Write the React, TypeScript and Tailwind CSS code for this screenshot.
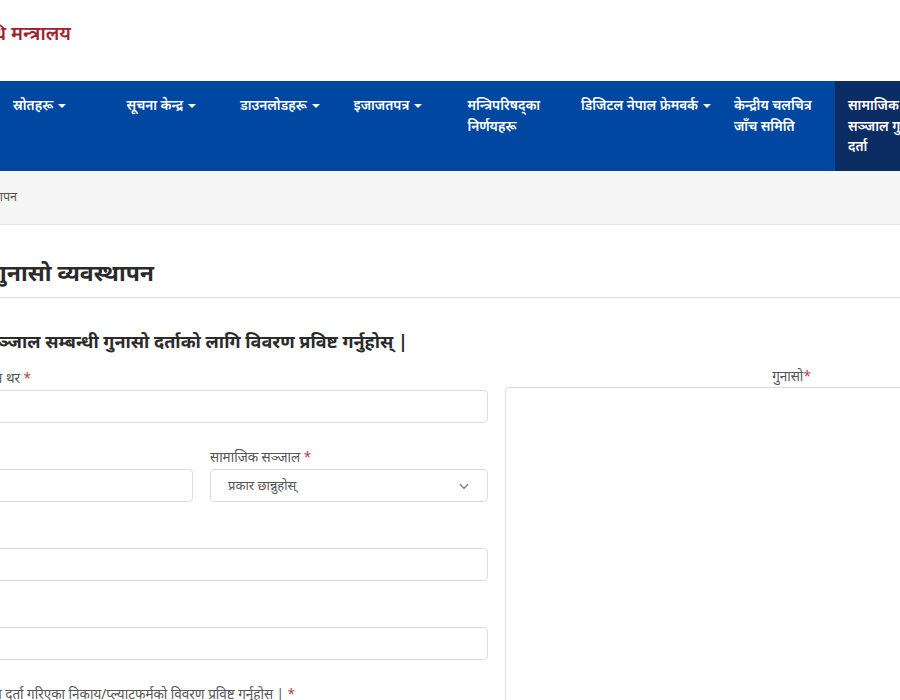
import React from "react";

const Caret = () => (
  <span className="ml-[5px] inline-block h-0 w-0 border-x-[4px] border-t-[4px] border-x-transparent border-t-white align-middle" />
);

const NavItem = ({ w, children, active }: { w: string; children: React.ReactNode; active?: boolean }) => (
  <div className={`${w} shrink-0 px-[13px] pt-[14px] text-[13.5px] font-semibold leading-[20.5px] text-white ${active ? "bg-[#0b2d63]" : ""}`}>
    {children}
  </div>
);

const Label = ({ children, star = true }: { children: React.ReactNode; star?: boolean }) => (
  <div className="h-[20px] whitespace-nowrap text-[13.5px] leading-[20px] text-[#555]">
    {children}
    {star && <span className="text-[#b3404a]"> *</span>}
  </div>
);

const Input = () => <div className="h-[33px] rounded-[4px] border border-[#dcdcdc] bg-white" />;

export default function App() {
  return (
    <div
      className="relative h-[700px] w-[900px] overflow-hidden bg-white"
      style={{ fontFamily: '"Noto Sans", "Noto Sans Devanagari", sans-serif' }}
    >
      {/* top header */}
      <div className="flex h-[81px] items-center">
        <div className="flex w-[71px] shrink-0 justify-end pb-[14px]">
          <span className="whitespace-nowrap text-[19px] font-semibold text-[#a3202f]">
            सञ्चार तथा सूचना प्रविधि मन्त्रालय
          </span>
        </div>
      </div>

      {/* nav */}
      <div className="flex h-[90px] bg-[#0047a1]">
        <NavItem w="w-[113.6px]">
          स्रोतहरू<Caret />
        </NavItem>
        <NavItem w="w-[113.6px]">
          सूचना केन्द्र<Caret />
        </NavItem>
        <NavItem w="w-[113.6px]">
          डाउनलोडहरू<Caret />
        </NavItem>
        <NavItem w="w-[113.6px]">
          इजाजतपत्र<Caret />
        </NavItem>
        <NavItem w="w-[113.6px]">
          मन्त्रिपरिषद्का
          <br />
          निर्णयहरू
        </NavItem>
        <NavItem w="w-[153px]">
          <span className="whitespace-nowrap">
            डिजिटल नेपाल फ्रेमवर्क<Caret />
          </span>
        </NavItem>
        <NavItem w="w-[114px]">
          केन्द्रीय चलचित्र
          <br />
          जाँच समिति
        </NavItem>
        <NavItem w="w-[120px]" active>
          <span className="whitespace-nowrap">सामाजिक</span>
          <br />
          <span className="whitespace-nowrap">सञ्जाल गुनासो</span>
          <br />
          दर्ता
        </NavItem>
      </div>

      {/* breadcrumb */}
      <div className="flex h-[54px] items-center border-b border-[#e4e4e4] bg-[#f5f5f6]">
        <div className="flex w-[17px] shrink-0 justify-end">
          <span className="whitespace-nowrap text-[12.5px] text-[#555]">गृह / गुनासो व्यवस्थापन</span>
        </div>
      </div>

      {/* content */}
      <div className="ml-[-85px] w-[1163px]">
        <div className="border-b border-[#dcdcdc] pb-[10px] pt-[32px]">
          <div className="flex w-[239px] justify-end">
            <h1 className="whitespace-nowrap text-[23px] font-bold leading-[30px] text-[#2b2b2b]">
              सामाजिक सञ्जाल गुनासो व्यवस्थापन
            </h1>
          </div>
        </div>

        <div className="mt-[30px] flex w-[493px] justify-end">
          <h2 className="whitespace-nowrap text-[18px] font-bold leading-[26px] text-[#2b2b2b]">
            सामाजिक सञ्जाल सम्बन्धी गुनासो दर्ताको लागि विवरण प्रविष्ट गर्नुहोस् |
          </h2>
        </div>

        <div className="mt-[14px] grid grid-cols-2 gap-[17px]">
          {/* left column */}
          <div className="flex flex-col">
            <div className="mb-[24px]">
              <div className="flex w-[116px] justify-end">
                <Label>पूरा नाम थर</Label>
              </div>
              <div className="mt-[2px]">
                <Input />
              </div>
            </div>

            <div className="mb-[24px] grid grid-cols-2 gap-[17px]">
              <div>
                <Label>सम्पर्क नम्बर</Label>
                <div className="mt-[2px]">
                  <Input />
                </div>
              </div>
              <div>
                <Label>सामाजिक सञ्जाल</Label>
                <div className="mt-[2px] flex h-[33px] items-center justify-between rounded-[4px] border border-[#dcdcdc] bg-white pl-[17px] pr-[17px]">
                  <span className="text-[13px] text-[#555]">प्रकार छान्नुहोस्</span>
                  <svg width="12" height="12" viewBox="0 0 16 16" fill="none" stroke="#777" strokeWidth="1.6" strokeLinecap="round" strokeLinejoin="round">
                    <path d="M3 6l5 5 5-5" />
                  </svg>
                </div>
              </div>
            </div>

            <div className="mb-[24px]">
              <Label>इमेल</Label>
              <div className="mt-[2px]">
                <Input />
              </div>
            </div>

            <div className="mb-[24px]">
              <Label>ठेगाना</Label>
              <div className="mt-[2px]">
                <Input />
              </div>
            </div>

            <div className="flex w-[380px] justify-end">
              <Label>सामाजिक सञ्जालमा दर्ता गरिएका निकाय/प्ल्याटफर्मको विवरण प्रविष्ट गर्नुहोस् |</Label>
            </div>
          </div>

          {/* right column */}
          <div className="flex flex-col">
            <div className="mt-[-2px] h-[20px] text-center text-[13.5px] leading-[20px] text-[#555]">
              गुनासो<span className="text-[#b3404a]">*</span>
            </div>
            <div className="mt-[1px] h-[320px] rounded-[4px] border border-[#dcdcdc] bg-white" />
          </div>
        </div>
      </div>
    </div>
  );
}
